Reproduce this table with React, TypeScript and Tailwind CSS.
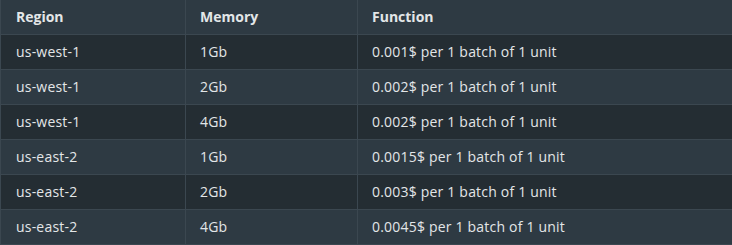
import React from 'react';

const rows = [
  { region: 'us-west-1', memory: '1Gb', fn: '0.001$ per 1 batch of 1 unit' },
  { region: 'us-west-1', memory: '2Gb', fn: '0.002$ per 1 batch of 1 unit' },
  { region: 'us-west-1', memory: '4Gb', fn: '0.002$ per 1 batch of 1 unit' },
  { region: 'us-east-2', memory: '1Gb', fn: '0.0015$ per 1 batch of 1 unit' },
  { region: 'us-east-2', memory: '2Gb', fn: '0.003$ per 1 batch of 1 unit' },
  { region: 'us-east-2', memory: '4Gb', fn: '0.0045$ per 1 batch of 1 unit' },
];

export default function App() {
  return (
    <div className="w-[732px] h-[245px] overflow-hidden bg-[#2e3a43] font-['Open_Sans',sans-serif] text-[14px] text-[#e3e6e8]">
      <table className="w-[733px] border-collapse table-fixed">
        <colgroup>
          <col className="w-[185px]" />
          <col className="w-[172px]" />
          <col />
        </colgroup>
        <thead>
          <tr className="h-[34px] bg-[#2e3a43]">
            <th className="border border-[#3b4750] border-t-0 pl-[15px] pb-[1px] text-left font-bold">Region</th>
            <th className="border border-[#3b4750] border-t-0 pl-[14px] pb-[1px] text-left font-bold">Memory</th>
            <th className="border border-[#3b4750] border-t-0 pl-[14px] pb-[1px] text-left font-bold">Function</th>
          </tr>
        </thead>
        <tbody className="tracking-[0.2px]">
          {rows.map((r, i) => (
            <tr key={i} className={`h-[35px] ${i % 2 === 0 ? 'bg-[#242d33]' : 'bg-[#2e3a43]'}`}>
              <td className="border border-[#3b4750] pl-[15px]">{r.region}</td>
              <td className="border border-[#3b4750] pl-[14px]">{r.memory}</td>
              <td className="border border-[#3b4750] pl-[14px]">{r.fn}</td>
            </tr>
          ))}
        </tbody>
      </table>
    </div>
  );
}
